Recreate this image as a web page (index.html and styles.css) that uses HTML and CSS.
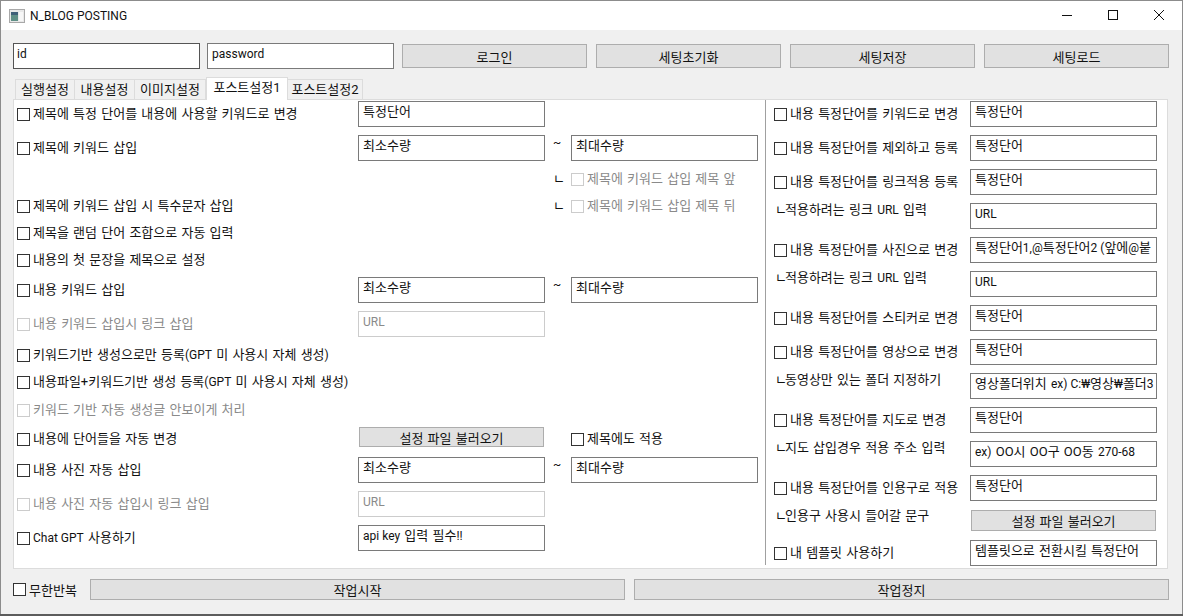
FILE: index.html
```html
<!DOCTYPE html>
<html lang="ko">
<head>
<meta charset="utf-8">
<title>N_BLOG POSTING</title>
<link rel="stylesheet" href="styles.css">
</head>
<body>
<div class="window">
  <header class="titlebar">
    <svg class="appicon" width="16" height="16" viewBox="0 0 16 16"><rect x="0.5" y="1.5" width="15" height="13" fill="#e8e8e8" stroke="#a8a8a8"/><rect x="2" y="4" width="7" height="9" fill="#5f8f86"/><rect x="2" y="4" width="7" height="3" fill="#3f5f78"/><rect x="10" y="4" width="4" height="9" fill="#f6f6f6"/></svg>
    <span class="apptitle">N_BLOG POSTING</span>
    <div class="winctl">
      <svg width="46" height="29" viewBox="0 0 46 29"><path d="M18 14.5h10" stroke="#111" fill="none"/></svg>
      <svg width="46" height="29" viewBox="0 0 46 29"><rect x="18.5" y="9.5" width="9" height="9" stroke="#111" fill="none"/></svg>
      <svg width="46" height="29" viewBox="0 0 46 29"><path d="M18 9l10 10M28 9l-10 10" stroke="#111" fill="none"/></svg>
    </div>
  </header>

  <div class="toprow">
    <div class="field login dark lat">id</div>
    <div class="field login lat">password</div>
    <div class="topbtns">
      <button class="btn top">로그인</button>
      <button class="btn top">세팅초기화</button>
      <button class="btn top">세팅저장</button>
      <button class="btn top">세팅로드</button>
    </div>
  </div>

  <nav class="tabs">
    <span class="tab t1">실행설정</span>
    <span class="tab t2">내용설정</span>
    <span class="tab t3">이미지설정</span>
    <span class="tab active">포스트설정1</span>
    <span class="tab t5">포스트설정2</span>
  </nav>

  <main class="pane">
    <section class="left">
      <div class="row"><label class="chk"><i class="box"></i>제목에 특정 단어를 내용에 사용할 키워드로 변경</label><div class="field">특정단어</div></div>
      <div class="row"><label class="chk"><i class="box"></i>제목에 키워드 삽입</label><div class="field">최소수량</div><span class="tilde">~</span><div class="field">최대수량</div></div>
      <div class="row"><span class="mark">ㄴ</span><label class="chk off"><i class="box"></i>제목에 키워드 삽입 제목 앞</label></div>
      <div class="row"><label class="chk"><i class="box"></i>제목에 키워드 삽입 시 특수문자 삽입</label><span class="mark">ㄴ</span><label class="chk off"><i class="box"></i>제목에 키워드 삽입 제목 뒤</label></div>
      <div class="row"><label class="chk"><i class="box"></i>제목을 랜덤 단어 조합으로 자동 입력</label></div>
      <div class="row"><label class="chk"><i class="box"></i>내용의 첫 문장을 제목으로 설정</label></div>
      <div class="row"><label class="chk"><i class="box"></i>내용 키워드 삽입</label><div class="field">최소수량</div><span class="tilde">~</span><div class="field">최대수량</div></div>
      <div class="row"><label class="chk off"><i class="box"></i>내용 키워드 삽입시 링크 삽입</label><div class="field off lat">URL</div></div>
      <div class="row"><label class="chk"><i class="box"></i><span>키워드기반 생성으로만 등록<span class="lat">(GPT</span> 미 사용시 자체 생성<span class="lat">)</span></span></label></div>
      <div class="row"><label class="chk"><i class="box"></i><span>내용파일+키워드기반 생성 등록<span class="lat">(GPT</span> 미 사용시 자체 생성<span class="lat">)</span></span></label></div>
      <div class="row"><label class="chk off"><i class="box"></i>키워드 기반 자동 생성글 안보이게 처리</label></div>
      <div class="row"><label class="chk"><i class="box"></i>내용에 단어들을 자동 변경</label><button class="btn file">설정 파일 불러오기</button><label class="chk after"><i class="box"></i>제목에도 적용</label></div>
      <div class="row"><label class="chk"><i class="box"></i>내용 사진 자동 삽입</label><div class="field">최소수량</div><span class="tilde">~</span><div class="field">최대수량</div></div>
      <div class="row"><label class="chk off"><i class="box"></i>내용 사진 자동 삽입시 링크 삽입</label><div class="field off lat">URL</div></div>
      <div class="row"><label class="chk"><i class="box"></i><span><span class="lat">Chat GPT</span> 사용하기</span></label><div class="field"><span class="lat">api key</span> 입력 필수<span class="lat">!!</span></div></div>
    </section>

    <section class="right">
      <div class="rrow"><label class="chk"><i class="box"></i>내용 특정단어를 키워드로 변경</label><div class="field">특정단어</div></div>
      <div class="rrow"><label class="chk"><i class="box"></i>내용 특정단어를 제외하고 등록</label><div class="field">특정단어</div></div>
      <div class="rrow"><label class="chk"><i class="box"></i>내용 특정단어를 링크적용 등록</label><div class="field">특정단어</div></div>
      <div class="rrow"><span class="sub"><span class="hook">ㄴ</span>적용하려는 링크 <span class="lat">URL</span> 입력</span><div class="field lat">URL</div></div>
      <div class="rrow"><label class="chk"><i class="box"></i>내용 특정단어를 사진으로 변경</label><div class="field">특정단어<span class="lat">1,@</span>특정단어<span class="lat">2 (</span>앞에<span class="lat">@</span>붙</div></div>
      <div class="rrow"><span class="sub"><span class="hook">ㄴ</span>적용하려는 링크 <span class="lat">URL</span> 입력</span><div class="field lat">URL</div></div>
      <div class="rrow"><label class="chk"><i class="box"></i>내용 특정단어를 스티커로 변경</label><div class="field">특정단어</div></div>
      <div class="rrow"><label class="chk"><i class="box"></i>내용 특정단어를 영상으로 변경</label><div class="field">특정단어</div></div>
      <div class="rrow"><span class="sub"><span class="hook">ㄴ</span>동영상만 있는 폴더 지정하기</span><div class="field">영상폴더위치 <span class="lat">ex) C:₩</span>영상<span class="lat">₩</span>폴더<span class="lat">3</span></div></div>
      <div class="rrow"><label class="chk"><i class="box"></i>내용 특정단어를 지도로 변경</label><div class="field">특정단어</div></div>
      <div class="rrow"><span class="sub"><span class="hook">ㄴ</span>지도 삽입경우 적용 주소 입력</span><div class="field"><span class="lat">ex)</span> OO시 OO구 OO동 <span class="lat">270-68</span></div></div>
      <div class="rrow"><label class="chk"><i class="box"></i>내용 특정단어를 인용구로 적용</label><div class="field">특정단어</div></div>
      <div class="rrow short"><span class="sub"><span class="hook">ㄴ</span>인용구 사용시 들어갈 문구</span><button class="btn filer">설정 파일 불러오기</button></div>
      <div class="rrow"><label class="chk"><i class="box"></i>내 템플릿 사용하기</label><div class="field">템플릿으로 전환시킬 특정단어</div></div>
    </section>
  </main>

  <footer class="bottom">
    <label class="chk loop"><i class="box"></i>무한반복</label>
    <button class="btn run">작업시작</button>
    <button class="btn run">작업정지</button>
  </footer>
</div>
</body>
</html>
```

FILE: styles.css
```css
* { box-sizing: border-box; }
html, body { margin: 0; height: 100%; }
body {
  background: #5c5c5c;
  font-family: Roboto, "Noto Sans CJK KR", sans-serif;
  font-size: 13px;
  word-spacing: 1px;
  color: #111;
  overflow: hidden;
}
.lat { font-size: 12px; word-spacing: 0; }
.window {
  width: 1183px;
  height: 614px;
  background: #f0f0f0;
  border: 1px solid #8c8c8c;
  border-bottom: 0;
  display: flex;
  flex-direction: column;
}
.titlebar {
  height: 29px;
  background: #fff;
  display: flex;
  align-items: center;
  padding-left: 8px;
  flex: none;
}
.apptitle { margin-left: 5px; font-size: 12px; word-spacing: 0; }
.appicon { display: block; }
.winctl { margin-left: auto; display: flex; }
.winctl svg { display: block; }

.toprow {
  display: flex;
  align-items: center;
  margin-top: 13px;
  padding-left: 12px;
  gap: 7px;
  flex: none;
}
.topbtns { display: flex; gap: 9px; margin-left: 1px; }

.field {
  width: 187px;
  height: 26px;
  background: #fff;
  border: 1px solid #7a7a7a;
  padding: 1px 0 0 4px;
  line-height: 17px;
  white-space: nowrap;
  overflow: hidden;
  flex: none;
}
.field.lat { padding-top: 2px; }
.field.dark { border-color: #555; padding-left: 3px; }
.field.off { border-color: #ccc; color: #8a8a8a; }

.btn {
  background: #e1e1e1;
  border: 1px solid #adadad;
  font: inherit;
  word-spacing: inherit;
  color: #111;
  padding: 0;
  margin: 0;
}
.btn.top { width: 185px; height: 24px; }
.btn.file { width: 185px; height: 20px; margin: 1px 0 5px 1px; }
.btn.filer { width: 185px; height: 21px; margin-left: 1px; }
.btn.run { flex: 1; height: 21px; }

.tabs {
  display: flex;
  align-items: flex-end;
  height: 22px;
  margin-top: 8px;
  padding-left: 14px;
  flex: none;
  position: relative;
  z-index: 1;
}
.tab {
  height: 20px;
  border: 1px solid #dcdcdc;
  border-bottom: 0;
  border-left: 0;
  text-align: center;
  line-height: 19px;
  word-spacing: 0;
}
.t1 { width: 60px; border-left: 1px solid #dcdcdc; }
.t2 { width: 60px; }
.t3 { width: 71px; }
.t5 { width: 75px; }
.tab.active {
  width: 82px;
  height: 23px;
  margin-bottom: -1px;
  background: #fff;
  border-left: 1px solid #dcdcdc;
}
.pane {
  margin: 0 14px 0 12px;
  height: 470px;
  background: #fff;
  border: 1px solid #dcdcdc;
  display: flex;
  flex: none;
}
.left {
  width: 751px;
  height: 468px;
  padding: 1px 0 0 3px;
  display: grid;
  grid-template-rows: 34px 31px 27px 27px 27px 30px 34px 31px 27px 28px 29px 31px 34px 34px 26px;
  flex: none;
}
.row {
  display: grid;
  grid-template-columns: 341px 187px 26px 187px;
  align-items: center;
  height: 26px;
}
.mark { grid-column: 3; padding: 0 0 4px 8px; }
.tilde { padding: 0 0 10px 8px; font-size: 12px; }
.chk {
  display: flex;
  align-items: center;
  gap: 3px;
  white-space: nowrap;
  margin-bottom: 3px;
}
.chk.off { color: #8a8a8a; }
.chk.after { grid-column: 3 / 5; padding-left: 26px; }
.box {
  width: 13px;
  height: 13px;
  margin-top: 3px;
  background: #fff;
  border: 1px solid #333;
  flex: none;
}
.off .box { border-color: #ccc; }

.right {
  flex: 1;
  border-left: 1px solid #a0a0a0;
  height: 465px;
  padding: 1px 0 0 8px;
  display: flex;
  flex-direction: column;
  gap: 8px;
}
.rrow {
  display: flex;
  align-items: center;
  height: 26px;
  flex: none;
}
.rrow.short { height: 23px; }
.rrow .chk { width: 196px; }
.sub {
  width: 196px;
  padding: 0 0 12px 1px;
  white-space: nowrap;
  line-height: 14px;
}
.hook { margin-right: -2px; }
.rrow.short .sub { padding-bottom: 10px; }

.bottom {
  display: flex;
  align-items: center;
  gap: 9px;
  margin-top: 10px;
  padding: 0 13px 0 12px;
  flex: none;
}
.loop { width: 68px; margin-bottom: 0; }
.loop .box { margin-top: 0; }
```
